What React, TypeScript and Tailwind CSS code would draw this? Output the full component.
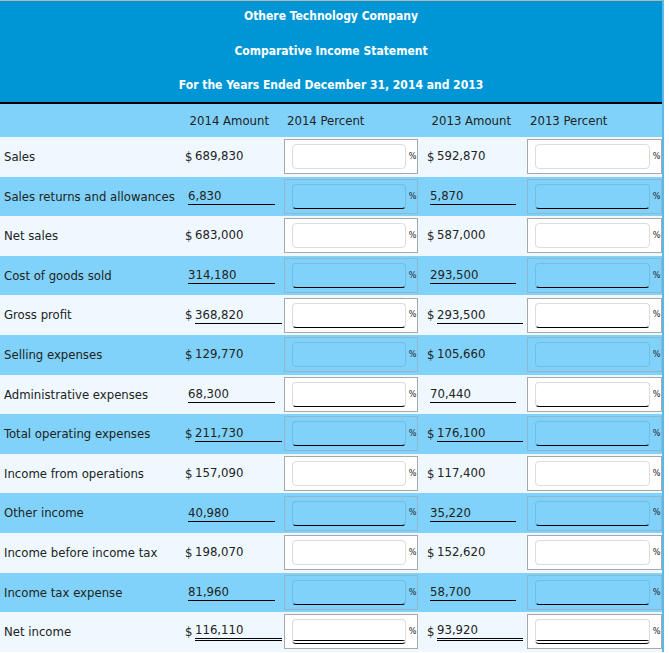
import React from "react";

type Row = {
  label: string;
  a14: string;
  a13: string;
  dollar?: boolean;
  line?: "single" | "double";
};

const rows: Row[] = [
  { label: "Sales", a14: "689,830", a13: "592,870", dollar: true },
  { label: "Sales returns and allowances", a14: "6,830", a13: "5,870", line: "single" },
  { label: "Net sales", a14: "683,000", a13: "587,000", dollar: true },
  { label: "Cost of goods sold", a14: "314,180", a13: "293,500", line: "single" },
  { label: "Gross profit", a14: "368,820", a13: "293,500", dollar: true, line: "single" },
  { label: "Selling expenses", a14: "129,770", a13: "105,660", dollar: true },
  { label: "Administrative expenses", a14: "68,300", a13: "70,440", line: "single" },
  { label: "Total operating expenses", a14: "211,730", a13: "176,100", dollar: true, line: "single" },
  { label: "Income from operations", a14: "157,090", a13: "117,400", dollar: true },
  { label: "Other income", a14: "40,980", a13: "35,220", line: "single" },
  { label: "Income before income tax", a14: "198,070", a13: "152,620", dollar: true },
  { label: "Income tax expense", a14: "81,960", a13: "58,700", line: "single" },
  { label: "Net income", a14: "116,110", a13: "93,920", dollar: true, line: "double" },
];

const font = { fontFamily: '"DejaVu Sans Condensed", "DejaVu Sans", sans-serif' };

function lineClass(line?: "single" | "double") {
  if (line === "single") return "border-b border-black";
  if (line === "double") return "border-b-[3px] border-double border-black";
  return "border-b border-transparent";
}

function Amount({ value, dollar, line, right }: { value: string; dollar?: boolean; line?: "single" | "double"; right: number }) {
  if (dollar) {
    return (
      <div className="flex items-center h-full">
        <span className="w-[10px]">$</span>
        <span className={`flex-1 leading-[16px] ${lineClass(line)}`} style={{ marginRight: right }}>
          {value}
        </span>
      </div>
    );
  }
  return (
    <div className="flex items-center h-full">
      <span className={`flex-1 ml-[3px] leading-[16px] ${lineClass(line)}`} style={{ marginRight: right + 7 }}>
        {value}
      </span>
    </div>
  );
}

function PercentBox({ blue, line }: { blue: boolean; line?: "single" | "double" }) {
  const bottom =
    line === "single"
      ? "border-b-black border-b-[1.5px]"
      : line === "double"
      ? "border-b-black border-b-[4px] border-double"
      : "";
  return (
    <div
      className={`h-[35px] my-auto flex items-center border ${
        blue ? "border-[#8eb6cc] bg-[#80d2fa]" : "border-[#a8a8a8] bg-white"
      }`}
    >
      <div
        className={`ml-[7px] h-[25px] flex-1 rounded-[4px] border ${
          blue ? "border-[#74bde0] bg-[#80d2fa]" : "border-[#dcdcdc] bg-white"
        } ${bottom}`}
      />
      <span className="w-[11px] text-[9px] text-center pl-[2px]">%</span>
    </div>
  );
}

export default function App() {
  return (
    <div className="w-[669px] bg-white text-[#222] text-[13px]" style={font}>
      <div className="w-[664px] border-t border-[#b5b5b5] border-r-2 border-r-[#5ab9e6]">
        {/* Title block */}
        <div className="h-[103px] bg-[#0096d6] border-b-2 border-black flex flex-col items-center text-white font-bold text-[12px] pt-[6px]">
          <div className="h-[34.5px]">Othere Technology Company</div>
          <div className="h-[34.5px]">Comparative Income Statement</div>
          <div>For the Years Ended December 31, 2014 and 2013</div>
        </div>

        {/* Column headers */}
        <div className="grid grid-cols-[183px_101px_134px_109px_135px] h-[33px] bg-[#80d2fa] items-center">
          <div />
          <div className="text-right pr-[15px]">2014 Amount</div>
          <div className="pl-[3px]">2014 Percent</div>
          <div className="text-right pr-[16px]">2013 Amount</div>
          <div className="pl-[3px]">2013 Percent</div>
        </div>

        {rows.map((r, i) => {
          const blue = i % 2 === 1;
          return (
            <div
              key={r.label}
              className={`grid grid-cols-[183px_101px_134px_109px_135px] h-[39.6px] ${
                blue ? "bg-[#80d2fa]" : "bg-[#eff8ff]"
              }`}
            >
              <div className="flex items-center pl-[4px]">{r.label}</div>
              <div className="pl-[2px]">
                <Amount value={r.a14} dollar={r.dollar} line={r.line} right={2} />
              </div>
              <PercentBox blue={blue} line={r.line} />
              <div className="pl-[9px]">
                <Amount value={r.a13} dollar={r.dollar} line={r.line} right={4} />
              </div>
              <PercentBox blue={blue} line={r.line} />
            </div>
          );
        })}
      </div>
    </div>
  );
}
